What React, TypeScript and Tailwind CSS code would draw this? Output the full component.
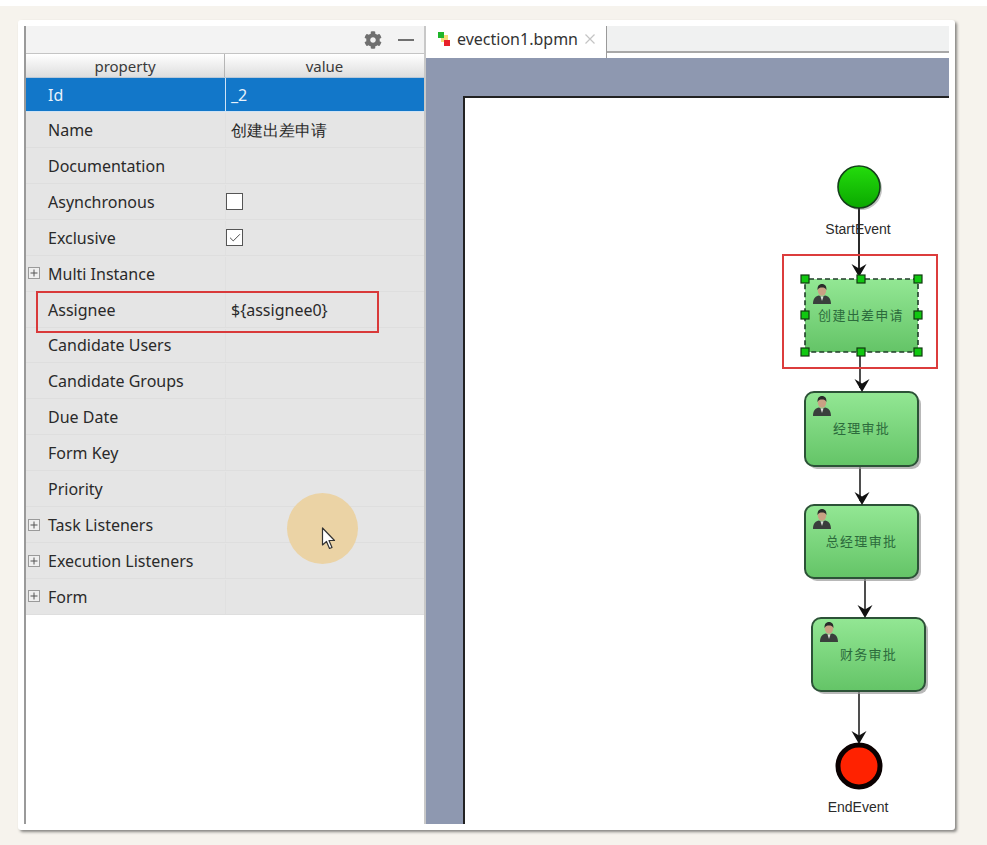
import React from 'react';
import { Check } from 'lucide-react';
import { FaCog } from 'react-icons/fa';

interface Row {
  name: string;
  value?: string;
  expandable?: boolean;
  checkbox?: 'on' | 'off';
  selected?: boolean;
}

const rows: Row[] = [
  { name: 'Id', value: '_2', selected: true },
  { name: 'Name', value: '创建出差申请' },
  { name: 'Documentation' },
  { name: 'Asynchronous', checkbox: 'off' },
  { name: 'Exclusive', checkbox: 'on' },
  { name: 'Multi Instance', expandable: true },
  { name: 'Assignee', value: '${assignee0}' },
  { name: 'Candidate Users' },
  { name: 'Candidate Groups' },
  { name: 'Due Date' },
  { name: 'Form Key' },
  { name: 'Priority' },
  { name: 'Task Listeners', expandable: true },
  { name: 'Execution Listeners', expandable: true },
  { name: 'Form', expandable: true },
];

const PlusBox = () => (
  <span className="absolute left-[2px] top-1/2 flex h-[12px] w-[12px] -translate-y-1/2 items-center justify-center border border-[#9a9a9a] bg-[#efefef]">
    <svg width="8" height="8" viewBox="0 0 8 8">
      <path d="M4 0.5V7.5M0.5 4H7.5" stroke="#555" strokeWidth="1" />
    </svg>
  </span>
);

const PropertyRow = ({ row }: { row: Row }) => (
  <div
    className={`relative flex min-h-0 items-center border-b ${
      row.selected
        ? 'h-[34px] shrink-0 border-[#cfe3f5] bg-[#1277c9] text-[#e8f2fb]'
        : 'flex-1 border-[#dedede] bg-[#e5e5e5] pt-[1px] text-[#2a2a2a]'
    }`}
  >
    {row.expandable && <PlusBox />}
    <div className="w-[199px] pl-[22px]">{row.name}</div>
    <div className={`flex h-full flex-1 items-center border-l pl-[5px] ${row.selected ? 'border-[#cfe3f5]' : 'border-[#e0e0e0]'}`}>
      {row.checkbox ? (
        <span className="ml-[-5px] flex h-[17px] w-[17px] items-center justify-center border border-[#555] bg-white">
          {row.checkbox === 'on' && <Check size={14} strokeWidth={1.5} color="#333" />}
        </span>
      ) : (
        row.value
      )}
    </div>
  </div>
);

const Person = ({ x, y }: { x: number; y: number }) => (
  <g transform={`translate(${x} ${y})`}>
    <path d="M0 20C0 14 3 12 6 11.5L9 13L12 11.5C15 12 18 14 18 20Z" fill="#3a3f3c" />
    <path d="M7.5 12.5L9 17L10.5 12.5Z" fill="#d9dcd8" />
    <ellipse cx="9" cy="6.5" rx="4.2" ry="5.2" fill="#c9a184" />
    <path d="M4.6 6C4 1.5 7 0 9 0C11 0 14 1.5 13.4 6C12.5 3.8 11 3.4 9 3.4C7 3.4 5.5 3.8 4.6 6Z" fill="#2a2c2a" />
  </g>
);

const Arrow = ({ x, y, from }: { x: number; y: number; from: number }) => (
  <path d={`M${x} ${from}V${y - 4}`} stroke="#222" strokeWidth="1.6" fill="none" />
);

const Head = ({ x, y }: { x: number; y: number }) => (
  <path d={`M${x} ${y}L${x - 7.5} ${y - 13}L${x} ${y - 8.5}L${x + 7.5} ${y - 13}Z`} fill="#111" />
);

const Task = ({ x, y, h = 74, label }: { x: number; y: number; h?: number; label: string }) => (
  <g>
    <rect x={x + 3} y={y + 3} width="113" height={h} rx="9" fill="#9a9a9a" opacity="0.7" />
    <rect x={x} y={y} width="113" height={h} rx="9" fill="url(#taskFill)" stroke="#2c5237" strokeWidth="2" />
    <Person x={x + 8} y={y + 4} />
    <text
      x={x + 56.5}
      y={y + 41}
      textAnchor="middle"
      fontSize="13"
      letterSpacing="1.3"
      fill="#2c6b3c"
      fontFamily="'Noto Sans CJK SC', sans-serif"
    >
      {label}
    </text>
  </g>
);

const handles: [number, number][] = [
  [805, 279], [861, 279], [918, 279],
  [805, 315], [918, 315],
  [805, 352], [861, 352], [918, 352],
];

const Diagram = () => (
  <svg className="absolute inset-0 h-full w-full" viewBox="465 98 484 726" preserveAspectRatio="xMinYMin slice">
    <defs>
      <linearGradient id="taskFill" x1="0" y1="0" x2="0" y2="1">
        <stop offset="0" stopColor="#93e794" />
        <stop offset="1" stopColor="#64c467" />
      </linearGradient>
      <linearGradient id="startFill" x1="0" y1="0" x2="0" y2="1">
        <stop offset="0" stopColor="#24dc0c" />
        <stop offset="1" stopColor="#0aa800" />
      </linearGradient>
    </defs>

    <Arrow x={859} from={208} y={278} />
    <Arrow x={860} from={352} y={392} />
    <Arrow x={860} from={466} y={505} />
    <Arrow x={865} from={578} y={618} />
    <Arrow x={859} from={691} y={743} />

    <circle cx="861" cy="189" r="21" fill="#a8a8a8" opacity="0.7" />
    <circle cx="859" cy="187" r="21" fill="url(#startFill)" stroke="#14401a" strokeWidth="1.6" />
    <text x="858" y="234" textAnchor="middle" fontSize="14" fill="#2b2b2b" fontFamily="'Liberation Sans', sans-serif">
      StartEvent
    </text>
    <path d="M859 208V278" stroke="#222" strokeWidth="1.6" />

    {/* selected task */}
    <rect x="805" y="279" width="113" height="73" rx="4" fill="url(#taskFill)" stroke="#1f3d28" strokeWidth="1.6" strokeDasharray="5 3" />
    <Person x={813} y={284} />
    <text x="861" y="320" textAnchor="middle" fontSize="13" letterSpacing="1.3" fill="#2c6b3c" fontFamily="'Noto Sans CJK SC', sans-serif">
      创建出差申请
    </text>
    <Head x={859} y={277} />
    {handles.map(([hx, hy]) => (
      <rect key={`${hx}-${hy}`} x={hx - 4} y={hy - 4} width="8" height="8" fill="#10c810" stroke="#123a12" strokeWidth="1.2" />
    ))}
    <rect x="783" y="255" width="154" height="113" fill="none" stroke="#dc3c3c" strokeWidth="2" />

    <Task x={805} y={392} label="经理审批" />
    <Task x={805} y={505} h={73} label="总经理审批" />
    <Task x={812} y={618} h={73} label="财务审批" />
    <Head x={862} y={392} />
    <Head x={862} y={505} />
    <Head x={865} y={618} />
    <Head x={859} y={744} />

    <circle cx="859" cy="766" r="21" fill="#ff2200" stroke="#0a0000" strokeWidth="5" />
    <text x="858" y="812" textAnchor="middle" fontSize="14" fill="#2b2b2b" fontFamily="'Liberation Sans', sans-serif">
      EndEvent
    </text>
  </svg>
);

export default function App() {
  return (
    <div className="flex h-[845px] w-[987px] flex-col overflow-hidden bg-[#f6f3ed] font-['Noto_Sans',sans-serif]">
      <div className="h-[6px] bg-white" />

      <div className="ml-[18px] mt-[14px] flex h-[810px] w-[937px] rounded-[3px] bg-white pb-[6px] pl-[6px] pr-[6px] pt-[6px] shadow-[2px_2px_3px_rgba(0,0,0,0.45)]">
        {/* properties panel */}
        <aside className="flex w-[402px] flex-col border-l-2 border-r-2 border-l-[#9a9a9a] border-r-[#c8c8c8] bg-white text-[16px]">
          <div className="flex h-[28px] items-center justify-end border-b border-[#c4c4c4] bg-[#f3f3f3] pr-[10px]">
            <FaCog size={18} color="#707070" />
            <div className="ml-[16px] h-[2px] w-[16px] bg-[#707070]" />
          </div>
          <div className="flex h-[24px] border-b border-[#b8c8d8] bg-gradient-to-b from-white to-[#dedede] text-[15px] leading-[24px] text-[#3a3a3a]">
            <div className="w-[199px] border-r border-[#b5b5b5] text-center">property</div>
            <div className="flex-1 text-center">value</div>
          </div>
          <div className="relative flex h-[537px] flex-col">
            {rows.map((row) => (
              <PropertyRow key={row.name} row={row} />
            ))}
            {/* assignee highlight */}
            <div className="absolute left-[10px] top-[213px] h-[42px] w-[343px] border-2 border-[#d9393a]" />
            {/* recorded pointer */}
            <div className="absolute left-[261px] top-[415px] h-[71px] w-[71px] rounded-full bg-[#ebd3a5]" />
            <svg className="absolute left-[295px] top-[449px]" width="16" height="24" viewBox="0 0 16 24">
              <path d="M1.5 1V18L5.5 14.5L8.5 21.5L11 20.5L8 13.5H13.5Z" fill="#fff" stroke="#333" strokeWidth="1.2" strokeLinejoin="round" />
            </svg>
          </div>
          <div className="flex-1 bg-white" />
        </aside>

        {/* editor */}
        <main className="flex min-w-0 flex-1 flex-col">
          <div className="flex h-[32px] bg-white">
            <div className="flex w-[181px] items-center border-r border-[#9a9a9a] pb-[6px] pl-[11px] text-[16px] text-[#333]">
              <svg width="14" height="16" viewBox="0 0 14 16" className="mr-[6px] shrink-0">
                <rect x="4" y="4" width="7" height="7" fill="#f5dc7a" />
                <rect x="1" y="1" width="6" height="6" fill="#1fb52a" />
                <rect x="7" y="9" width="6" height="6" fill="#e8202a" />
              </svg>
              evection1.bpmn
              <svg width="12" height="12" viewBox="0 0 12 12" className="ml-[6px] shrink-0">
                <path d="M1.5 1.5L10.5 10.5M10.5 1.5L1.5 10.5" stroke="#c4c4c4" strokeWidth="1.2" />
              </svg>
            </div>
            <div className="h-[27px] flex-1 border-b-2 border-[#a8a8a8] bg-[#f0f1f1]" />
          </div>
          <div className="flex min-h-0 flex-1 bg-[#8e98b0] pl-[37px] pt-[38px]">
            <div className="relative flex-1 overflow-hidden border-l-2 border-t-2 border-[#222] bg-white">
              <Diagram />
            </div>
          </div>
        </main>
      </div>
    </div>
  );
}
